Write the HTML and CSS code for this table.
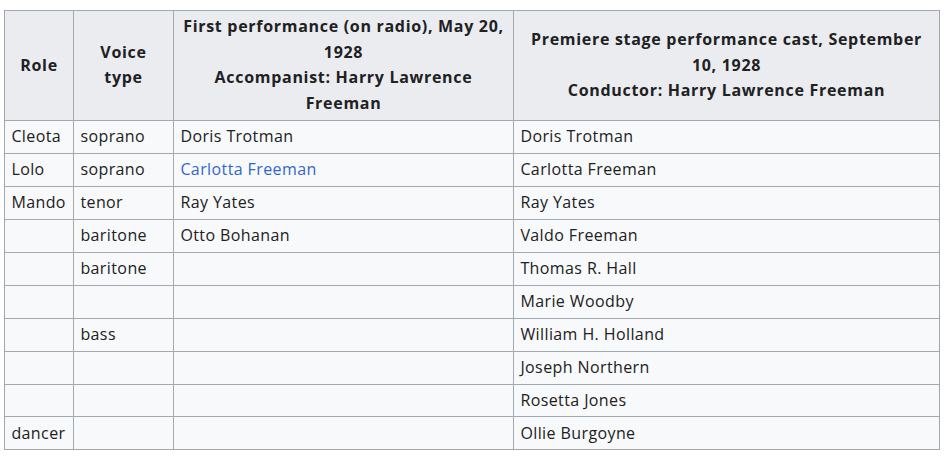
FILE: index.html
```html
<!DOCTYPE html>
<html>
<head>
<meta charset="utf-8">
<link rel="stylesheet" href="styles.css">
</head>
<body>
<div class="page">
<table class="wikitable">
<colgroup>
<col class="c-role">
<col class="c-voice">
<col class="c-first">
<col class="c-premiere">
</colgroup>
<thead>
<tr>
<th>Role</th>
<th>Voice type</th>
<th>First performance (on radio), May 20, 1928<br>Accompanist: Harry Lawrence Freeman</th>
<th>Premiere stage performance cast, September 10, 1928<br>Conductor: Harry Lawrence Freeman</th>
</tr>
</thead>
<tbody>
<tr><td>Cleota</td><td>soprano</td><td>Doris Trotman</td><td>Doris Trotman</td></tr>
<tr><td>Lolo</td><td>soprano</td><td><a href="#">Carlotta Freeman</a></td><td>Carlotta Freeman</td></tr>
<tr><td>Mando</td><td>tenor</td><td>Ray Yates</td><td>Ray Yates</td></tr>
<tr><td></td><td>baritone</td><td>Otto Bohanan</td><td>Valdo Freeman</td></tr>
<tr><td></td><td>baritone</td><td></td><td>Thomas R. Hall</td></tr>
<tr><td></td><td></td><td></td><td>Marie Woodby</td></tr>
<tr><td></td><td>bass</td><td></td><td>William H. Holland</td></tr>
<tr><td></td><td></td><td></td><td>Joseph Northern</td></tr>
<tr><td></td><td></td><td></td><td>Rosetta Jones</td></tr>
<tr><td>dancer</td><td></td><td></td><td>Ollie Burgoyne</td></tr>
</tbody>
</table>
</div>
</body>
</html>
```
FILE: styles.css
```css
html, body {
  margin: 0;
  padding: 0;
  background: #ffffff;
}
.page {
  padding: 10px 4px;
}
.wikitable {
  border-collapse: collapse;
  table-layout: fixed;
  width: 935px;
  background: #f8f9fa;
  color: #202122;
  border: 1px solid #a2a9b1;
  font-family: "Open Sans", "Liberation Sans", sans-serif;
  font-size: 16px;
  line-height: 1.6;
  letter-spacing: 0.4px;
}
.c-role { width: 69px; }
.c-voice { width: 100px; }
.c-first { width: 340px; }
.c-premiere { width: 426px; }
.wikitable th,
.wikitable td {
  border: 1px solid #a2a9b1;
  padding: 3.2px 6.4px;
  height: 25.6px;
}
.wikitable th {
  background: #eaecf0;
  font-weight: 700;
  letter-spacing: 0.7px;
  text-align: center;
  vertical-align: middle;
}
.wikitable td {
  text-align: left;
  vertical-align: middle;
}
.wikitable a {
  color: #3366cc;
  text-decoration: none;
}
```
